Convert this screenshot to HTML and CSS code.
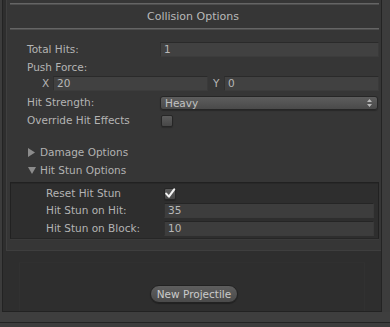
FILE: index.html
```html
<!DOCTYPE html>
<html>
<head>
<meta charset="utf-8">
<link rel="stylesheet" href="styles.css">
</head>
<body>
<div class="window">
  <div class="panel">
    <div class="form">
      <div class="sep sep-top"></div>
      <div class="title">Collision Options</div>
      <div class="sep"></div>

      <div class="row row-total">
        <span class="label">Total Hits:</span>
        <div class="field">1</div>
      </div>
      <div class="row row-push">
        <span class="label">Push Force:</span>
      </div>
      <div class="row row-xy">
        <span class="axis">X</span>
        <div class="field field-x">20</div>
        <span class="axis axis-y">Y</span>
        <div class="field field-y">0</div>
      </div>
      <div class="row row-strength">
        <span class="label">Hit Strength:</span>
        <div class="dropdown">
          <span>Heavy</span>
          <svg class="updown" width="5" height="8" viewBox="0 0 5 8"><path d="M2.5 0 L5 3 L0 3 Z M0 5 L5 5 L2.5 8 Z" fill="#b8b8b8"/></svg>
        </div>
      </div>
      <div class="row row-override">
        <span class="label">Override Hit Effects</span>
        <div class="cb-cell"><span class="checkbox"></span></div>
      </div>

      <div class="foldout foldout-damage">
        <svg class="tri" width="8" height="9" viewBox="0 0 8 9"><path d="M0 0 L7 4.5 L0 9 Z" fill="#8c8c8c"/></svg>
        <span>Damage Options</span>
      </div>
      <div class="foldout foldout-stun">
        <svg class="tri" width="8" height="9" viewBox="0 0 8 9"><path d="M0 1 L8 1 L4 8 Z" fill="#8c8c8c"/></svg>
        <span>Hit Stun Options</span>
      </div>

      <div class="subbox">
        <div class="subrow subrow-reset">
          <span class="label">Reset Hit Stun</span>
          <div class="cb-cell">
            <span class="checkbox checked">
              <svg width="12" height="12" viewBox="0 0 12 12"><path d="M2.2 5.6 L4.9 8.6 L10.2 1.4" fill="none" stroke="#f2f2f2" stroke-width="2.1" stroke-linecap="round" stroke-linejoin="round"/></svg>
            </span>
          </div>
        </div>
        <div class="subrow subrow-hit">
          <span class="label">Hit Stun on Hit:</span>
          <div class="field">35</div>
        </div>
        <div class="subrow subrow-block">
          <span class="label">Hit Stun on Block:</span>
          <div class="field">10</div>
        </div>
      </div>
    </div>

    <div class="lower">
      <div class="lower-frame">
        <button class="btn">New Projectile</button>
      </div>
    </div>
  </div>
  <div class="statusband"></div>
  <div class="statusline"></div>
</div>
</body>
</html>
```

FILE: styles.css
```css
* { box-sizing: border-box; }

html, body {
  margin: 0;
  padding: 0;
}

body {
  width: 390px;
  height: 327px;
  background: #3c3c3c;
  font-family: "DejaVu Sans", "Lucida Grande", sans-serif;
  font-size: 10.5px;
  color: #b4b4b4;
  overflow: hidden;
}

.window {
  display: flex;
  flex-direction: column;
  height: 327px;
}

.panel {
  margin-left: 2px;
  width: 380px;
  height: 312px;
  border-left: 1px solid #232323;
  border-right: 1px solid #232323;
  border-bottom: 1px solid #222222;
  background: #2e2e2e;
  display: flex;
  flex-direction: column;
  padding-left: 3px;
}

.form {
  height: 251px;
  background: #363636;
  border-left: 1px solid #3f3f3f;
  border-bottom: 1px solid #3e3e3e;
  display: flex;
  flex-direction: column;
}

.sep {
  height: 2px;
  margin: 0 2px 0 3px;
  background: #4e4e4e;
  border-top: 1px solid #656565;
}

.sep-top {
  margin-top: 3px;
}

.title {
  height: 23px;
  line-height: 23px;
  text-align: center;
  font-size: 11px;
  color: #b9b9b9;
  padding-right: 2px;
}

.row {
  display: grid;
  grid-template-columns: 133px 1fr;
  align-items: center;
  padding: 0 2px 0 20px;
  height: 15px;
}

.label {
  white-space: nowrap;
  line-height: 15px;
}

.field {
  height: 15px;
  background: #414141;
  border-top: 1px solid #2a2a2a;
  border-left: 1px solid #303030;
  border-right: 1px solid #3a3a3a;
  border-bottom: 1px solid #3c3c3c;
  padding-left: 3px;
  line-height: 13px;
  color: #b8b8b8;
}

.row-total { margin-top: 12px; }
.row-push { margin-top: 3px; }

.row-xy {
  margin-top: 1px;
  display: flex;
  padding-left: 35px;
}

.axis {
  width: 11px;
  line-height: 15px;
}

.axis-y {
  width: 16px;
  padding-left: 5px;
}

.field-x { width: 155px; }
.field-y { flex: 1; }

.row-strength {
  margin-top: 4px;
  height: 14px;
}

.dropdown {
  height: 14px;
  margin-right: 1px;
  border: 1px solid #262626;
  border-radius: 3px;
  background: linear-gradient(#5d5d5d, #4a4a4a);
  box-shadow: 0 1px 1px rgba(0, 0, 0, 0.25);
  display: flex;
  align-items: center;
  justify-content: space-between;
  padding: 0 5px 0 4px;
  color: #c2c2c2;
  line-height: 12px;
}

.updown { display: block; }

.row-override {
  margin-top: 4px;
  height: 14px;
}

.cb-cell {
  display: flex;
  align-items: center;
  padding-left: 1px;
}

.checkbox {
  display: block;
  width: 12px;
  height: 12px;
  border: 1px solid #262626;
  border-radius: 2px;
  background: linear-gradient(#5c5c5c, #474747);
  box-shadow: 0 1px 1px rgba(0, 0, 0, 0.2);
}

.checkbox svg {
  display: block;
  margin: -1px 0 0 -1px;
}

.foldout {
  display: flex;
  align-items: center;
  height: 14px;
  padding-left: 21px;
  gap: 4px;
  color: #b2b2b2;
}

.tri { display: block; }

.foldout-damage { margin-top: 18px; }
.foldout-stun { margin-top: 4px; }

.subbox {
  margin: 5px 2px 0 3px;
  height: 57px;
  background: #2e2e2e;
  border: 1px solid #212121;
  border-bottom-color: #262626;
  box-shadow: 0 1px 0 #3b3b3b, inset 0 1px 0 #282828;
  display: flex;
  flex-direction: column;
  padding: 3px 4px 2px 35px;
}

.subrow {
  display: grid;
  grid-template-columns: 118px 1fr;
  align-items: center;
  height: 15px;
}

.subrow .field {
  background: #3d3d3d;
  border-top-color: #252525;
}

.subrow-reset {
  height: 13px;
}

.subrow-reset .cb-cell { padding-left: 0; }

.subrow-hit { margin-top: 4px; }
.subrow-block { margin-top: 3px; }

.lower {
  flex: 1;
  display: flex;
  padding: 11px 16px 0 13px;
}

.lower-frame {
  flex: 1;
  border-left: 1px solid #313131;
  border-right: 1px solid #313131;
  border-top: 1px solid #303030;
  display: flex;
  justify-content: center;
  align-items: flex-start;
  padding-top: 22px;
  padding-left: 4px;
}

.btn {
  height: 18px;
  padding: 0 6px;
  border: 1px solid #222222;
  border-radius: 9px;
  background: linear-gradient(#5e5e5e, #4a4a4a);
  box-shadow: 0 1px 1px rgba(0, 0, 0, 0.3);
  font-family: "DejaVu Sans", "Lucida Grande", sans-serif;
  font-size: 10.5px;
  color: #cbcbcb;
  line-height: 16px;
}

.statusband {
  height: 10px;
  background: #3e3e3e;
}

.statusline {
  height: 1px;
  background: #222222;
}
```
